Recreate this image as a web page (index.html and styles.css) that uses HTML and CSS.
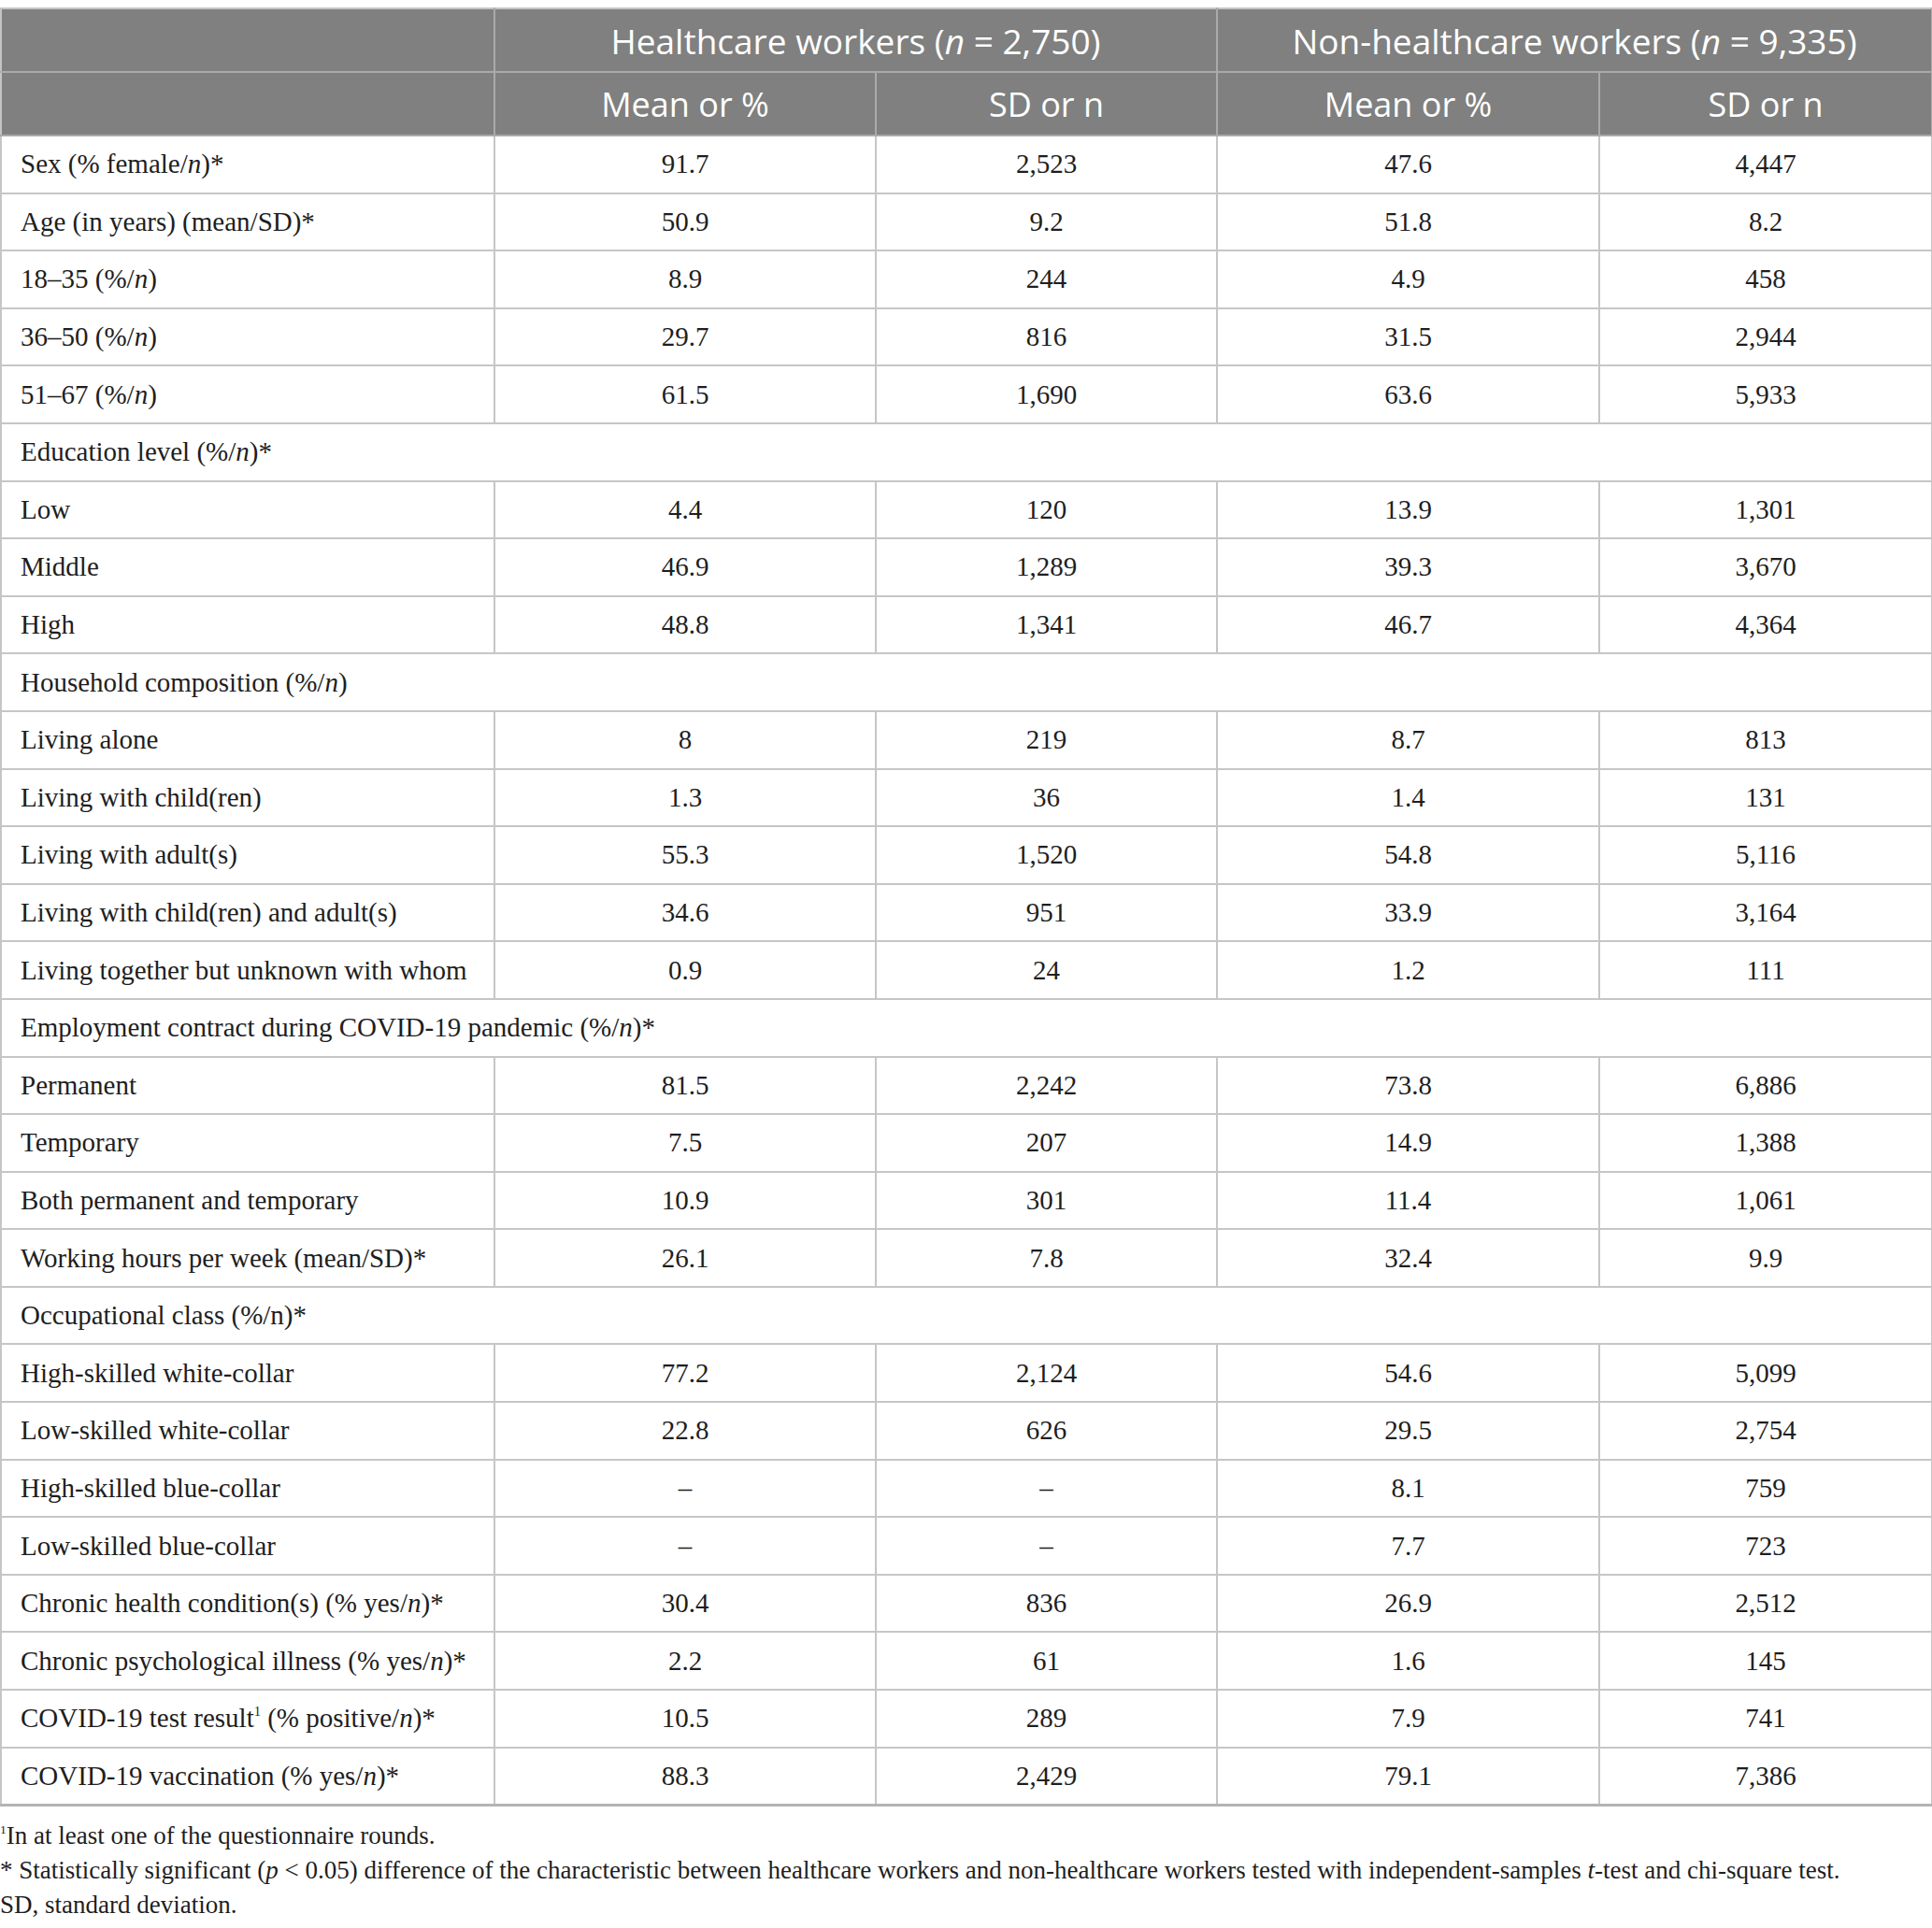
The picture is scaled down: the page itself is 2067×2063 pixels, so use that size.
FILE: index.html
```html
<!DOCTYPE html>
<html lang="en">
<head>
  <meta charset="UTF-8">
  <title>Healthcare vs non-healthcare workers</title>
  <link rel="stylesheet" href="styles.css">
</head>
<body>
  <table class="data">
    <colgroup>
      <col class="c-label">
      <col class="c-mean">
      <col class="c-sd">
      <col class="c-mean2">
      <col class="c-sd2">
    </colgroup>
    <thead>
      <tr class="group">
        <th></th>
        <th colspan="2">Healthcare workers (<i>n</i> = 2,750)</th>
        <th colspan="2">Non-healthcare workers (<i>n</i> = 9,335)</th>
      </tr>
      <tr class="sub">
        <th></th>
        <th>Mean or %</th>
        <th>SD or n</th>
        <th>Mean or %</th>
        <th>SD or n</th>
      </tr>
    </thead>
    <tbody>
      <tr><td>Sex (% female/<i>n</i>)*</td><td>91.7</td><td>2,523</td><td>47.6</td><td>4,447</td></tr>
      <tr><td>Age (in years) (mean/SD)*</td><td>50.9</td><td>9.2</td><td>51.8</td><td>8.2</td></tr>
      <tr><td>18–35 (%/<i>n</i>)</td><td>8.9</td><td>244</td><td>4.9</td><td>458</td></tr>
      <tr><td>36–50 (%/<i>n</i>)</td><td>29.7</td><td>816</td><td>31.5</td><td>2,944</td></tr>
      <tr><td>51–67 (%/<i>n</i>)</td><td>61.5</td><td>1,690</td><td>63.6</td><td>5,933</td></tr>
      <tr><td colspan="5">Education level (%/<i>n</i>)*</td></tr>
      <tr><td>Low</td><td>4.4</td><td>120</td><td>13.9</td><td>1,301</td></tr>
      <tr><td>Middle</td><td>46.9</td><td>1,289</td><td>39.3</td><td>3,670</td></tr>
      <tr><td>High</td><td>48.8</td><td>1,341</td><td>46.7</td><td>4,364</td></tr>
      <tr><td colspan="5">Household composition (%/<i>n</i>)</td></tr>
      <tr><td>Living alone</td><td>8</td><td>219</td><td>8.7</td><td>813</td></tr>
      <tr><td>Living with child(ren)</td><td>1.3</td><td>36</td><td>1.4</td><td>131</td></tr>
      <tr><td>Living with adult(s)</td><td>55.3</td><td>1,520</td><td>54.8</td><td>5,116</td></tr>
      <tr><td>Living with child(ren) and adult(s)</td><td>34.6</td><td>951</td><td>33.9</td><td>3,164</td></tr>
      <tr><td>Living together but unknown with whom</td><td>0.9</td><td>24</td><td>1.2</td><td>111</td></tr>
      <tr><td colspan="5">Employment contract during COVID-19 pandemic (%/<i>n</i>)*</td></tr>
      <tr><td>Permanent</td><td>81.5</td><td>2,242</td><td>73.8</td><td>6,886</td></tr>
      <tr><td>Temporary</td><td>7.5</td><td>207</td><td>14.9</td><td>1,388</td></tr>
      <tr><td>Both permanent and temporary</td><td>10.9</td><td>301</td><td>11.4</td><td>1,061</td></tr>
      <tr><td>Working hours per week (mean/SD)*</td><td>26.1</td><td>7.8</td><td>32.4</td><td>9.9</td></tr>
      <tr><td colspan="5">Occupational class (%/n)*</td></tr>
      <tr><td>High-skilled white-collar</td><td>77.2</td><td>2,124</td><td>54.6</td><td>5,099</td></tr>
      <tr><td>Low-skilled white-collar</td><td>22.8</td><td>626</td><td>29.5</td><td>2,754</td></tr>
      <tr><td>High-skilled blue-collar</td><td>–</td><td>–</td><td>8.1</td><td>759</td></tr>
      <tr><td>Low-skilled blue-collar</td><td>–</td><td>–</td><td>7.7</td><td>723</td></tr>
      <tr><td>Chronic health condition(s) (% yes/<i>n</i>)*</td><td>30.4</td><td>836</td><td>26.9</td><td>2,512</td></tr>
      <tr><td>Chronic psychological illness (% yes/<i>n</i>)*</td><td>2.2</td><td>61</td><td>1.6</td><td>145</td></tr>
      <tr><td>COVID-19 test result<sup>1</sup> (% positive/<i>n</i>)*</td><td>10.5</td><td>289</td><td>7.9</td><td>741</td></tr>
      <tr><td>COVID-19 vaccination (% yes/<i>n</i>)*</td><td>88.3</td><td>2,429</td><td>79.1</td><td>7,386</td></tr>
    </tbody>
  </table>

  <div class="notes">
    <p><sup>1</sup>In at least one of the questionnaire rounds.</p>
    <p>* Statistically significant (<i>p</i> &lt; 0.05) difference of the characteristic between healthcare workers and non-healthcare workers tested with independent-samples <i>t</i>-test and chi-square test.</p>
    <p>SD, standard deviation.</p>
  </div>
</body>
</html>
```

FILE: styles.css
```css
body {
  margin: 0;
  padding-top: 8px;
  background: #fff;
  font-family: "Liberation Serif", "Times New Roman", serif;
  color: #1e1e1e;
}

.data {
  width: 2066px;
  border-collapse: collapse;
  table-layout: fixed;
  border-bottom: 3px solid #b4b4b4;
}

.c-label { width: 528px; }
.c-mean { width: 408px; }
.c-sd { width: 365px; }
.c-mean2 { width: 409px; }
.c-sd2 { width: 356px; }

thead th {
  background: #7f807f;
  color: #fff;
  font-family: "Open Sans", "Liberation Sans", sans-serif;
  font-weight: 400;
  font-size: 36px;
  text-align: center;
  height: 66px;
  padding: 0;
  border: 2px solid #a9aaa9;
}

thead tr.group th {
  font-size: 37px;
  border-top-color: #c4c4c4;
}

thead tr.group th:first-child,
thead tr.sub th:first-child {
  border-left-color: #c4c4c4;
}

tbody td {
  height: 59.6px;
  padding: 0;
  font-size: 29px;
  text-align: center;
  border: 2px solid #c6c6c6;
}

tbody td:first-child {
  text-align: left;
  padding-left: 20px;
}

sup {
  font-size: 0.5em;
  vertical-align: 0.8em;
  line-height: 0;
}

.notes {
  padding-top: 13px;
  font-size: 27px;
  line-height: 37px;
}

.notes p {
  margin: 0;
}
```
